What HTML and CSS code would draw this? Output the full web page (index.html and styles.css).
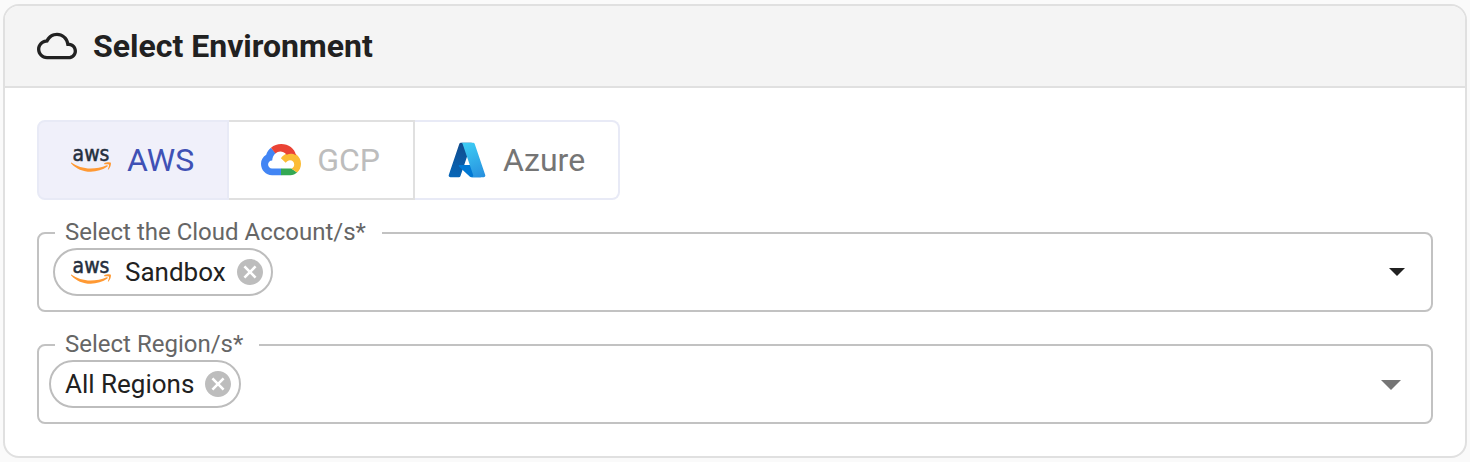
FILE: index.html
```html
<!DOCTYPE html>
<html lang="en">
<head>
	<meta charset="utf-8">
	<title>Select Environment</title>
	<link rel="stylesheet" href="styles.css">
</head>
<body>
	<svg class="defs" aria-hidden="true">
		<symbol id="clear" viewBox="2 2 20 20">
			<path d="M12 2C6.470 2 2 6.470 2 12s4.470 10 10 10 10-4.470 10-10S17.530 2 12 2zm5 13.590L15.590 17 12 13.410 8.410 17 7 15.590 10.590 12 7 8.410 8.410 7 12 10.590 15.590 7 17 8.410 13.410 12 17 15.590z"/>
		</symbol>
		<symbol id="aws-smile" viewBox="0 0 40 34">
			<path d="M0.3 19.600C5.5 23.300 12.5 25.600 19.5 25.600c5.600 0 11.300-1.200 16.200-3.300.9-.4 1.700.6.700 1.300C32 26.900 25.500 28.800 19.700 28.800 12 28.800 5.200 25.800.2 20.500c-.5-.5 0-1.200.1-.9z"/>
			<path d="M33.300 20.200c2-1.400 6-1.200 6.500-.5.500.8-.2 5-2.300 6.800-.4.300-.8.100-.6-.4.500-1.200 1.500-3.900 1-4.500-.5-.7-3.200-.4-4.300-.3-.500 0-.700-.600-.300-1.100z"/>
		</symbol>
	</svg>

	<section class="card">
		<header class="card-header">
			<svg class="cloud" viewBox="0 0 24 24" aria-hidden="true">
				<path d="M19.35 10.04C18.67 6.590 15.640 4 12 4 9.110 4 6.600 5.640 5.350 8.040 2.340 8.360 0 10.910 0 14c0 3.310 2.690 6 6 6h13c2.760 0 5-2.240 5-5 0-2.640-2.050-4.780-4.650-4.960zM19 18H6c-2.210 0-4-1.790-4-4 0-2.050 1.530-3.760 3.560-3.970l1.070-.11.5-.95C8.080 7.140 9.940 6 12 6c2.620 0 4.880 1.860 5.390 4.430l.3 1.5 1.530.11c1.560.1 2.780 1.410 2.780 2.960 0 1.650-1.350 3-3 3z"/>
			</svg>
			<h2>Select Environment</h2>
		</header>

		<div class="card-body">
			<div class="providers">
				<button type="button" class="provider active" aria-pressed="true">
					<svg class="logo aws" viewBox="0 0 40 34">
						<text x="20" y="18" text-anchor="middle">aws</text>
						<use href="#aws-smile"/>
					</svg>
					AWS
				</button>
				<button type="button" class="provider gcp" disabled>
					<svg class="logo" viewBox="0 0 40 32">
						<path fill="#4285f4" d="M10 3.700C7.500 5.700 6 8 5.200 10.800 1.800 13 0 16 0 19.700 0 26 4.800 31.200 11 31.200h9.200v-6.800H11c-2.200 0-3.900-1.500-3.900-3.900 0-2.300 1.600-3.900 4.100-4 .2-3 1.200-5.500 3.400-7.300z"/>
						<path fill="#34a853" d="M20 24.400h10.300l5.800 4.200c-1.900 1.700-4.100 2.600-6.800 2.600H20z"/>
						<path fill="#fbbc35" d="M26.500 8.800l8.300 1.200C38 12.300 40 15.600 40 19.800c0 3.600-1.400 6.700-3.900 8.800l-5.800-4.200c1.800-.5 2.900-2 2.900-4 0-2.400-1.700-4.200-4.200-4.200-1.800 0-3 .8-4.300 2.600L19.900 14.200c1.700-2.200 3.800-3.900 6.600-5.400z"/>
						<path fill="#ea4335" d="M10 3.700C13 1.200 16.300 0 20.200 0c7.300 0 13.500 4.400 14.800 11.200-3.200-1.700-6.200-1.700-9.300-.4C21.800 6.300 17.500 6.700 14.400 9.400z"/>
					</svg>
					GCP
				</button>
				<button type="button" class="provider azure" aria-pressed="false">
					<svg class="logo" viewBox="0 0 96 96">
						<defs>
							<linearGradient id="az-left" x1="58.970" y1="7.410" x2="37.190" y2="103.760" gradientUnits="userSpaceOnUse">
								<stop offset="0" stop-color="#114a8b"/>
								<stop offset="1" stop-color="#0669bc"/>
							</linearGradient>
							<linearGradient id="az-right" x1="45" y1="10" x2="80" y2="88" gradientUnits="userSpaceOnUse">
								<stop offset="0" stop-color="#3ccbf4"/>
								<stop offset="1" stop-color="#2892df"/>
							</linearGradient>
						</defs>
						<path fill="url(#az-left)" d="M33.340 6.540h26.040l-27.030 80.100a4.150 4.150 0 0 1-3.940 2.810H8.150a4.140 4.140 0 0 1-3.930-5.470L29.400 9.380a4.150 4.150 0 0 1 3.940-2.830z"/>
						<path fill="#0078d4" d="M71.170 60.260H29.880a1.910 1.910 0 0 0-1.300 3.310l26.530 24.760a4.170 4.170 0 0 0 2.850 1.130h23.380z"/>
						<path fill="url(#az-right)" d="M66.600 9.360a4.140 4.140 0 0 0-3.930-2.820H33.650a4.150 4.150 0 0 1 3.930 2.820l25.180 74.620a4.150 4.150 0 0 1-3.930 5.480h29.020a4.150 4.150 0 0 0 3.930-5.480z"/>
					</svg>
					Azure
				</button>
			</div>

			<fieldset class="field">
				<legend><label for="account">Select the Cloud Account/s*</label></legend>
				<div class="field-row">
					<span class="chip chip-account">
						<svg class="logo aws" viewBox="0 0 40 34">
							<text x="20" y="18" text-anchor="middle">aws</text>
							<use href="#aws-smile"/>
						</svg>
						Sandbox
						<button type="button" class="remove" aria-label="Remove Sandbox"><svg><use href="#clear"/></svg></button>
					</span>
					<select id="account"><option value=""></option></select>
					<svg class="arrow" viewBox="0 0 20 10"><path d="M0 0h20L10 10z"/></svg>
				</div>
			</fieldset>

			<fieldset class="field field-region">
				<legend><label for="region">Select Region/s*</label></legend>
				<div class="field-row">
					<span class="chip">
						All Regions
						<button type="button" class="remove" aria-label="Remove All Regions"><svg><use href="#clear"/></svg></button>
					</span>
					<select id="region"><option value=""></option></select>
					<svg class="arrow" viewBox="0 0 20 10"><path d="M0 0h20L10 10z"/></svg>
				</div>
			</fieldset>
		</div>
	</section>
</body>
</html>
```

FILE: styles.css
```css
* {
	box-sizing: border-box;
}
body {
	margin: 0;
	padding: 4px 3px;
	background: #fafafa;
	color: #212121;
	font-family: Roboto, "Liberation Sans", sans-serif;
}
button, select {
	margin: 0;
	font: inherit;
}
svg {
	flex: none;
}
.defs {
	display: none;
}
.card {
	overflow: hidden;
	background: #fff;
	border: 2px solid #e0e0e0;
	border-radius: 16px;
}
.card-header {
	display: flex;
	align-items: center;
	gap: 16px;
	padding: 20px 32px;
	background: #f4f4f4;
	border-bottom: 2px solid #e0e0e0;
}
.card-header h2 {
	margin: 0;
	font-size: 32px;
	font-weight: 700;
	line-height: 40px;
}
.cloud {
	width: 40px;
	height: 40px;
	fill: #212121;
}
.card-body {
	display: flex;
	flex-direction: column;
	gap: 20px;
	padding: 32px;
}

/* cloud provider buttons */
.providers {
	display: flex;
}
.provider {
	display: flex;
	align-items: center;
	gap: 16px;
	height: 80px;
	padding: 0 33px 0 32px;
	background: #fff;
	border: 2px solid #e8eaf6;
	border-left-width: 0;
	color: #757575;
	font-size: 32px;
}
.provider:first-child {
	border-left-width: 2px;
	border-radius: 8px 0 0 8px;
}
.provider:last-child {
	border-radius: 0 8px 8px 0;
}
.provider.active {
	background: #f0f0fa;
	color: #3f51b5;
}
.provider.gcp {
	border-color: #e0e0e0;
	color: #bdbdbd;
}
.logo {
	width: 40px;
}
.aws {
	overflow: visible;
	fill: #ff9933;
}
.aws text {
	fill: #252f3e;
	font: 21px "DejaVu Sans Condensed", "Open Sans", sans-serif;
	stroke: #252f3e;
	stroke-width: 0.5px;
}

/* outlined select fields */
.field {
	min-width: 0;
	margin: 0;
	padding: 2px 14px 14px;
	border: 2px solid #c2c2c2;
	border-radius: 8px;
}
.field legend {
	margin-left: 2px;
	padding: 0 16px 2px 10px;
	color: #666;
	font-size: 24px;
	line-height: 24px;
}
.field-row {
	position: relative;
	display: flex;
}
.field select {
	flex: 1;
	min-width: 0;
	background: none;
	border: 0;
	outline: 0;
	appearance: none;
}
.chip {
	display: flex;
	align-items: center;
	height: 48px;
	padding: 0 8px 0 14px;
	border: 2px solid #bdbdbd;
	border-radius: 24px;
	font-size: 26px;
}
.chip .logo {
	margin-right: 14px;
}
.chip-account {
	padding-left: 16px;
}
.remove {
	display: flex;
	margin-left: 11px;
	padding: 0;
	background: none;
	border: 0;
}
.remove svg {
	width: 26px;
	height: 26px;
	fill: #bdbdbd;
}
.arrow {
	position: absolute;
	top: 20px;
	right: 12px;
	width: 16px;
	height: 8px;
	fill: #212121;
	pointer-events: none;
}
.field-region {
	padding-left: 10px;
}
.field-region legend {
	margin-left: 6px;
}
.field-region .arrow {
	right: 16px;
	width: 20px;
	height: 10px;
	fill: #757575;
}
```
